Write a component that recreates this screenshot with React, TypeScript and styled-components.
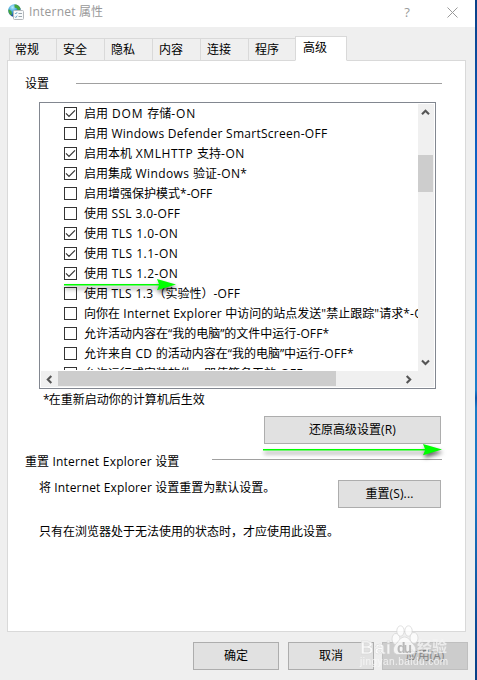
import React from "react";
import styled, { createGlobalStyle } from "styled-components";

const GlobalStyle = createGlobalStyle`
  * { box-sizing: border-box; }
  body {
    margin: 0;
    background: #efefef;
    overflow: hidden;
    font-family: "Open Sans", "Noto Sans CJK SC", sans-serif;
    font-size: 12px;
    line-height: 20px;
    color: #000;
  }
`;

const Screen = styled.div`
  position: relative;
  display: flex;
  width: 477px;
  height: 680px;
`;

const Window = styled.div`
  flex: 1;
  display: flex;
  flex-direction: column;
  background: #efefef;
`;

const DesktopEdge = styled.div`
  width: 2px;
  background: linear-gradient(#0a4187 0, #0b4c9e 60px, #0d60c4 150px, #1a78c8 300px, #1c80cc 390px, #0a56ac 398px, #1b7cc8 408px, #1a78c4 500px, #0b4c98 620px, #083f85 680px);
`;

const TitleBar = styled.header`
  display: flex;
  align-items: center;
  height: 27px;
  padding: 0 17px 3px 8px;
  background: #fff;
  color: #999;
`;

const Title = styled.span`
  flex: 1;
  padding-left: 5px;
`;

const HelpMark = styled.span`
  width: 12px;
  margin-right: 34px;
  font-size: 13px;
  text-align: center;
`;

const TabStrip = styled.nav`
  display: flex;
  align-items: flex-end;
  height: 34px;
  margin: 0 0 -1px 9px;
  z-index: 1;
`;

const Tab = styled.div<{ $active?: boolean }>`
  width: ${(p) => (p.$active ? 52 : 48)}px;
  height: ${(p) => (p.$active ? 25 : 23)}px;
  padding: ${(p) => (p.$active ? 1 : 1)}px 0 0 ${(p) => (p.$active ? 7 : 6)}px;
  background: ${(p) => (p.$active ? "#fff" : "#efefef")};
  border: 1px solid #d9d9d9;
  border-bottom-color: ${(p) => (p.$active ? "#fff" : "#d9d9d9")};
  border-right-width: ${(p) => (p.$active ? 1 : 0)}px;
  &:first-child { width: 47px; padding-left: 5px; }
  &:nth-child(6) { width: 47px; }
`;

const Panel = styled.main`
  width: 459px;
  height: 572px;
  margin-left: 7px;
  padding: 13px 23px 0 17px;
  background: #fff;
  border: 1px solid #d9d9d9;
`;

const GroupHeading = styled.div<{ $gap: number }>`
  display: flex;
  height: 20px;
  gap: ${(p) => p.$gap}px;
  white-space: nowrap;
`;

const Rule = styled.div<{ $top: number }>`
  flex: 1;
  height: 1px;
  margin-top: ${(p) => p.$top}px;
  background: #a0a0a0;
`;

const ListBox = styled.div`
  display: flex;
  flex-direction: column;
  width: 397px;
  height: 287px;
  margin: 8px 0 0 14px;
  padding: 1px;
  border: 1px solid #828790;
`;

const ListBody = styled.div`
  display: flex;
  height: 267px;
`;

const Options = styled.div`
  width: 377px;
  height: 266px;
  padding-left: 23px;
  overflow: hidden;
`;

const OptionRow = styled.label`
  display: flex;
  align-items: center;
  height: 20px;
  gap: 7px;
  white-space: nowrap;
`;

const Box = styled.span`
  display: flex;
  flex: none;
  width: 13px;
  height: 13px;
  margin-top: -1px;
  border: 1px solid #333;
  background: #fff;
`;

const VerticalBar = styled.div`
  display: flex;
  flex-direction: column;
  width: 16px;
  background: #f0f0f0;
`;

const HorizontalBar = styled.div`
  display: flex;
  height: 16px;
  background: #f0f0f0;
`;

const BarButton = styled.div<{ $end?: boolean }>`
  display: flex;
  align-items: center;
  justify-content: center;
  flex: none;
  width: 15px;
  height: 17px;
  ${VerticalBar} & { margin-top: ${(p) => (p.$end ? "auto" : "0")}; }
  ${HorizontalBar} & {
    width: 16px;
    height: 16px;
    margin: ${(p) => (p.$end ? "0 18px 0 auto" : "0")};
  }
`;

const VerticalThumb = styled.div`
  width: 15px;
  height: 37px;
  margin-top: 34px;
  background: #cdcdcd;
`;

const HorizontalThumb = styled.div`
  width: 278px;
  height: 15px;
  margin-left: 1px;
  background: #cdcdcd;
`;

const Note = styled.div<{ $top?: number; $left?: number }>`
  margin: ${(p) => p.$top ?? 0}px 0 0 ${(p) => p.$left ?? 14}px;
  white-space: nowrap;
`;

const Button = styled.button<{ $width: number }>`
  flex: none;
  width: ${(p) => p.$width}px;
  height: 28px;
  padding: 0 0 1px;
  font: inherit;
  color: #000;
  background: #e1e1e1;
  border: 1px solid #adadad;
  &:disabled {
    margin-left: -1px;
    color: #838383;
    background: #ccc;
    border-color: #bfbfbf;
  }
`;

const RestoreLine = styled.div`
  display: flex;
  justify-content: flex-end;
  margin: 6px 0 8px;
  padding-right: 1px;
`;

const ResetLine = styled.div`
  display: flex;
  justify-content: space-between;
  margin-top: 8px;
  padding-right: 1px;
`;

const Footer = styled.footer`
  display: flex;
  gap: 9px;
  padding: 10px 0 0 193px;
`;

const LatinRun = styled.span<{ $track: number }>`
  letter-spacing: ${(p) => p.$track}px;
`;

const ArrowSvg = styled.svg<{ $x: number; $y: number }>`
  position: absolute;
  z-index: 2;
  left: ${(p) => p.$x}px;
  top: ${(p) => p.$y}px;
  overflow: visible;
  filter: drop-shadow(1px 3px 2px rgba(0, 0, 0, 0.6));
`;

const Watermark = styled.svg`
  position: absolute;
  z-index: 2;
  left: 357px;
  top: 622px;
`;

function Mixed({ text, track = 0.15 }: { text: string; track?: number }) {
  return (
    <span>
      {text.split(/([\x20-\x7e]+)/).map((part, i) =>
        i % 2 ? <LatinRun key={i} $track={track}>{part}</LatinRun> : part
      )}
    </span>
  );
}

const chevrons = {
  up: "M1 6.3 L4.5 2.8 L8 6.3",
  down: "M1 2.5 L4.5 6 L8 2.5",
  left: "M6.3 1 L2.8 4.5 L6.3 8",
  right: "M2.7 1 L6.2 4.5 L2.7 8",
};

function Chevron({ dir }: { dir: keyof typeof chevrons }) {
  return (
    <svg width="9" height="9" viewBox="0 0 9 9">
      <path d={chevrons[dir]} fill="none" stroke="#555" strokeWidth="2.1" />
    </svg>
  );
}

function Arrow({ x, y, length }: { x: number; y: number; length: number }) {
  return (
    <ArrowSvg $x={x} $y={y} width={length} height="12">
      <path
        d={`M0 5 H${length - 17} L${length - 19} 0 L${length} 5.6 L${length - 19} 11.2 L${length - 17} 6.4 H0 Z`}
        fill="#0f0"
      />
    </ArrowSvg>
  );
}

function InternetIcon() {
  return (
    <svg width="16" height="17" viewBox="0 0 16 17">
      <defs>
        <radialGradient id="globe" cx=".35" cy=".25" r=".8">
          <stop offset="0" stopColor="#b7edff" />
          <stop offset=".45" stopColor="#3b9fd8" />
          <stop offset="1" stopColor="#12337c" />
        </radialGradient>
      </defs>
      <circle cx="6.5" cy="6.5" r="6.3" fill="url(#globe)" />
      <path d="M6.5 .5C9 .2 12 2 12.6 5L10 6.5 8.7 4.2 6.6 3.6zM.6 5.200L3.400 7 4 10.500 2.300 10.800C.7 9.200.1 7 .6 5.200z" fill="#46a63c" />
      <rect x="5.500" y="6.500" width="10" height="9" rx="1" fill="#f8fafb" stroke="#b4b8bc" />
      <path d="M7 9l.8 1L9.200 8M7 12.600l.8 1 1.400-2" fill="none" stroke="#6aa3c8" strokeWidth=".9" />
      <path d="M10.500 9.500H14M10.500 12.500H14" stroke="#9ba6ae" />
    </svg>
  );
}

const tabs = ["常规", "安全", "隐私", "内容", "连接", "程序", "高级"];

const options: { label: string; on?: boolean; track?: number }[] = [
  { label: "启用 DOM 存储-ON", on: true, track: 0.85 },
  { label: "启用 Windows Defender SmartScreen-OFF", track: 0.28 },
  { label: "启用本机 XMLHTTP 支持-ON", on: true, track: 0.6 },
  { label: "启用集成 Windows 验证-ON*", on: true, track: 0.4 },
  { label: "启用增强保护模式*-OFF", track: 0 },
  { label: "使用 SSL 3.0-OFF", track: 0.35 },
  { label: "使用 TLS 1.0-ON", on: true, track: 0.5 },
  { label: "使用 TLS 1.1-ON", on: true, track: 0.5 },
  { label: "使用 TLS 1.2-ON", on: true, track: 0.5 },
  { label: "使用 TLS 1.3（实验性）-OFF", track: 0.35 },
  { label: "向你在 Internet Explorer 中访问的站点发送\"禁止跟踪\"请求*-OFF", track: 0.2 },
  { label: "允许活动内容在“我的电脑”的文件中运行-OFF*" },
  { label: "允许来自 CD 的活动内容在“我的电脑”中运行-OFF*", track: 0.3 },
  { label: "允许运行或安装软件，即使签名无效-OFF", track: 0.3 },
];

export default function App() {
  return (
    <Screen>
      <GlobalStyle />
      <Window>
        <TitleBar>
          <InternetIcon />
          <Title><Mixed text="Internet 属性" track={0.2} /></Title>
          <HelpMark>?</HelpMark>
          <svg width="11" height="11" viewBox="0 0 11 11">
            <path d="M.5 .5l10 10M10.500 .5l-10 10" stroke="#999" />
          </svg>
        </TitleBar>
        <TabStrip>
          {tabs.map((t) => <Tab key={t} $active={t === "高级"}>{t}</Tab>)}
        </TabStrip>
        <Panel>
          <GroupHeading $gap={27}>
            设置
            <Rule $top={9} />
          </GroupHeading>
          <ListBox>
            <ListBody>
              <Options>
                {options.map((o) => (
                  <OptionRow key={o.label}>
                    <Box>
                      {o.on && (
                        <svg width="11" height="11" viewBox="0 0 11 11">
                          <path d="M1 5.300L4 8.300 10 2.300" fill="none" stroke="#333" strokeWidth="1.200" />
                        </svg>
                      )}
                    </Box>
                    <Mixed text={o.label} track={o.track} />
                  </OptionRow>
                ))}
              </Options>
              <VerticalBar>
                <BarButton><Chevron dir="up" /></BarButton>
                <VerticalThumb />
                <BarButton $end><Chevron dir="down" /></BarButton>
              </VerticalBar>
            </ListBody>
            <HorizontalBar>
              <BarButton><Chevron dir="left" /></BarButton>
              <HorizontalThumb />
              <BarButton $end><Chevron dir="right" /></BarButton>
            </HorizontalBar>
          </ListBox>
          <Note $top={1} $left={18}><Mixed text="*在重新启动你的计算机后生效" track={-0.8} /></Note>
          <RestoreLine>
            <Button $width={177}><Mixed text="还原高级设置(R)" /></Button>
          </RestoreLine>
          <GroupHeading $gap={33}>
            <Mixed text="重置 Internet Explorer 设置" track={0.25} />
            <Rule $top={7} />
          </GroupHeading>
          <ResetLine>
            <Note $top={-2}><Mixed text="将 Internet Explorer 设置重置为默认设置。" /></Note>
            <Button $width={103}><Mixed text="重置(S)..." /></Button>
          </ResetLine>
          <Note $top={14}>只有在浏览器处于无法使用的状态时，才应使用此设置。</Note>
        </Panel>
        <Footer>
          <Button $width={86}>确定</Button>
          <Button $width={86}>取消</Button>
          <Button $width={86} disabled>应用(A)</Button>
        </Footer>
      </Window>
      <DesktopEdge />
      <Arrow x={64} y={279} length={112} />
      <Arrow x={263} y={444} length={179} />
      <Watermark width="102" height="48" viewBox="0 0 102 48" opacity=".8">
        <g fill="#fff" stroke="#cfcfcf" strokeWidth=".8">
          <ellipse cx="39" cy="17" rx="4" ry="5.500" />
          <ellipse cx="43.500" cy="9" rx="3.700" ry="5.200" />
          <ellipse cx="51.500" cy="9" rx="3.700" ry="5.200" />
          <ellipse cx="57" cy="16" rx="4" ry="5.500" />
          <path d="M47.500 15c4 0 6 4.500 9 7.500 4 4 2.500 10-2.500 10h-13c-5 0-6-6-2.500-10 3-3 5-7.500 9-7.500z" />
        </g>
        <g fontFamily="Liberation Sans, Noto Sans CJK SC, sans-serif" fontWeight="700">
          <text x="3" y="32" fontSize="19" fill="#fff" stroke="#cfcfcf" strokeWidth=".4" textLength="31">Bai</text>
          <text x="40" y="31" fontSize="14" fill="#b5b5b5" textLength="15">du</text>
          <text x="60" y="30" fontSize="15" fill="#f4f4f4" textLength="30">经验</text>
        </g>
        <text x="3" y="43" fontSize="10" fontFamily="Liberation Sans, sans-serif" fill="#fafafa" textLength="88">jingyan.baidu.com</text>
      </Watermark>
    </Screen>
  );
}
